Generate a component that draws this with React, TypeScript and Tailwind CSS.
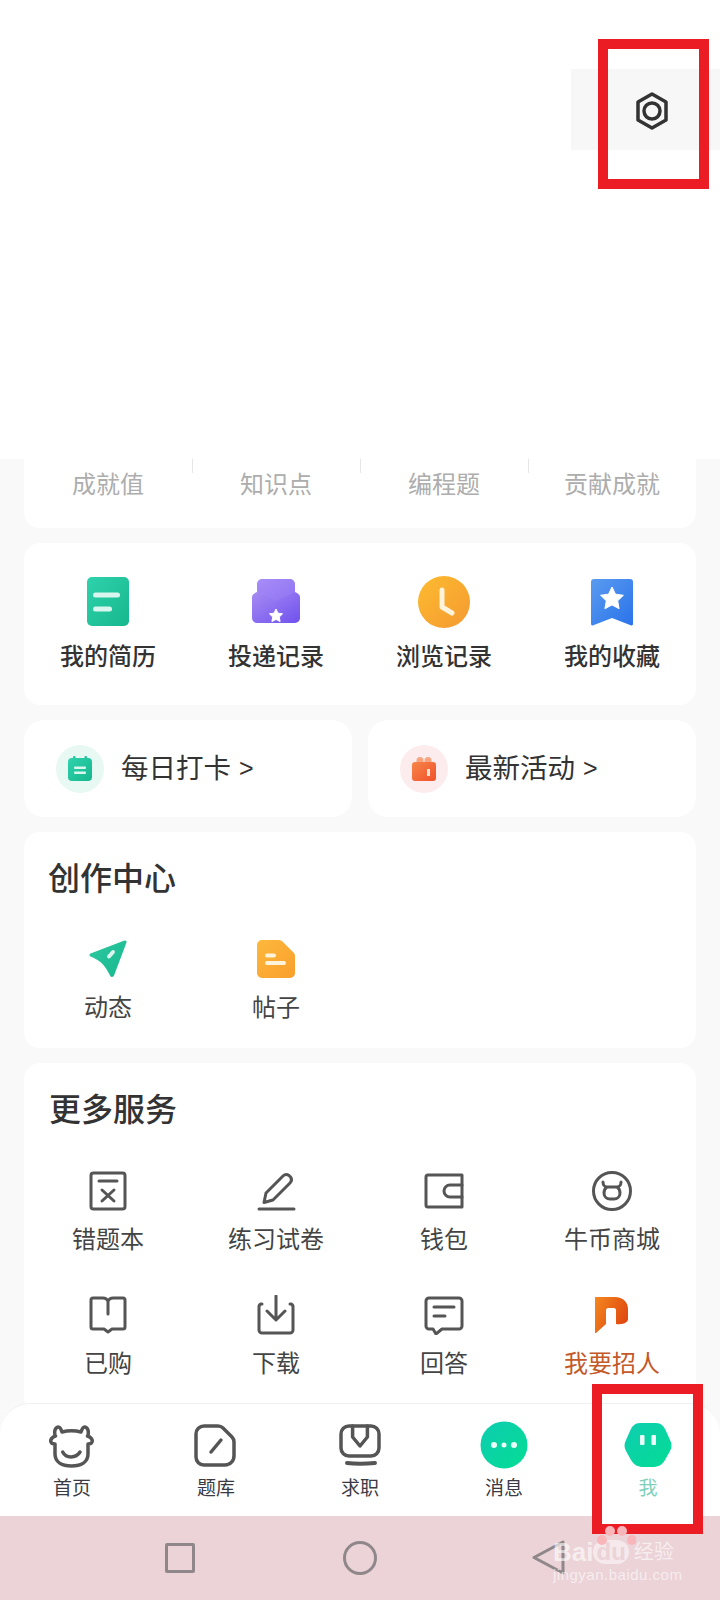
import type { ReactNode } from 'react';

const FONT = "font-['Liberation_Sans','Noto_Sans_CJK_SC',sans-serif]";

function Grad({ id, from, to }: { id: string; from: string; to: string }) {
  return (
    <linearGradient id={id} x1="0" y1="0" x2="1" y2="1">
      <stop offset="0" stopColor={from} />
      <stop offset="1" stopColor={to} />
    </linearGradient>
  );
}

// Colored shortcuts
function ResumeIcon() {
  return (
    <svg width="42" height="50" viewBox="0 0 42 50">
      <defs><Grad id="resume" from="#2ed2ac" to="#17b78d" /></defs>
      <rect x="0" y="0" width="42" height="49" rx="5" fill="url(#resume)" />
      <rect x="6" y="15.500" width="27" height="5" rx="2.500" fill="#d8f6ee" />
      <rect x="6" y="29.500" width="19" height="5" rx="2.500" fill="#d8f6ee" />
    </svg>
  );
}

function DeliveryIcon() {
  return (
    <svg width="50" height="50" viewBox="0 0 50 50">
      <defs>
        <Grad id="mail-top" from="#a88cf8" to="#8d72f2" />
        <Grad id="mail" from="#a78bf2" to="#6f51ee" />
      </defs>
      <path d="M6 7a5 5 0 0 1 5-5h28a5 5 0 0 1 5 5v20H6z" fill="url(#mail-top)" />
      <path d="M1 20c0-2 2-4 5-5l19 9 19-9c3 1 5 3 5 5v21a5 5 0 0 1-5 5H6a5 5 0 0 1-5-5z" fill="url(#mail)" />
      <path d="M25 32l2 4.200 4.600.6-3.300 3.200.8 4.600-4.100-2.200-4.100 2.200.8-4.600-3.300-3.200 4.600-.6z" fill="#fff" stroke="#fff" strokeLinejoin="round" />
    </svg>
  );
}

function ClockIcon() {
  return (
    <svg width="52" height="52" viewBox="0 0 52 52">
      <defs><Grad id="clock" from="#fdbb2f" to="#f49a32" /></defs>
      <circle cx="26" cy="26" r="26" fill="url(#clock)" />
      <path d="M24 14v17l10 6" fill="none" stroke="#fff3dc" strokeWidth="5" strokeLinecap="round" strokeLinejoin="round" />
    </svg>
  );
}

function BookmarkIcon() {
  return (
    <svg width="42" height="48" viewBox="0 0 42 48">
      <defs><Grad id="mark" from="#5a9bf0" to="#2a73ea" /></defs>
      <path d="M0 4a3 3 0 0 1 3-3h36a3 3 0 0 1 3 3v42a1.500 1.500 0 0 1-2.300 1.200L21 40 2.300 47.200A1.500 1.500 0 0 1 0 46z" fill="url(#mark)" />
      <path d="M21 9l3.500 7.200 7.900 1.100-5.700 5.500 1.400 7.900-7.100-3.800-7.100 3.800 1.400-7.900-5.700-5.500 7.900-1.100z" fill="#fff" stroke="#fff" strokeLinejoin="round" />
    </svg>
  );
}

function CheckinIcon() {
  return (
    <svg width="24" height="25" viewBox="0 0 24 25">
      <defs><Grad id="checkin" from="#2ed2ac" to="#17b78d" /></defs>
      <rect x="5" y="0" width="2.500" height="5" rx="1" fill="#24c39c" />
      <rect x="16.500" y="0" width="2.500" height="5" rx="1" fill="#24c39c" />
      <rect x="0" y="2" width="24" height="23" rx="4" fill="url(#checkin)" />
      <rect x="6" y="10.500" width="12" height="2.500" rx="1" fill="#d8f6ee" />
      <rect x="6" y="15.500" width="12" height="2.500" rx="1" fill="#d8f6ee" />
    </svg>
  );
}

function GiftIcon() {
  return (
    <svg width="24" height="24" viewBox="0 0 24 24">
      <defs><Grad id="gift" from="#f6864a" to="#f2512a" /></defs>
      <circle cx="8" cy="3.500" r="3.500" fill="#f6a57f" />
      <circle cx="16" cy="3.500" r="3.500" fill="#f6a57f" />
      <rect x="0" y="5" width="24" height="19" rx="3" fill="url(#gift)" />
      <rect x="15" y="12" width="3" height="7" fill="#fde2d6" />
    </svg>
  );
}

function SendIcon() {
  return (
    <svg width="38" height="38" viewBox="0 0 38 38">
      <defs><Grad id="send" from="#2fc8a0" to="#16b88f" /></defs>
      <path d="M1.500 13.500L35.500.6c1.300-.5 2.400.6 2 1.900L25 35.500c-.7 1.800-3 2-3.800.3-2.500-5-5-9.500-9.200-13.300C9 20 5.500 18 1.500 16.500c-1.400-.6-1.400-2.500 0-3z" fill="url(#send)" />
      <path d="M20 16.500l4-4.500" stroke="#d8f6ee" strokeWidth="4" strokeLinecap="round" />
    </svg>
  );
}

function PostIcon() {
  return (
    <svg width="38" height="38" viewBox="0 0 38 38">
      <defs><Grad id="post" from="#fdb83c" to="#f99f2c" /></defs>
      <path d="M5 0h17a5 5 0 0 1 3.500 1.500l11 11A5 5 0 0 1 38 16v17a5 5 0 0 1-5 5H5a5 5 0 0 1-5-5V5a5 5 0 0 1 5-5z" fill="url(#post)" />
      <rect x="8" y="13.500" width="11" height="4" rx="2" fill="#fff3dc" />
      <rect x="8" y="21" width="21" height="4" rx="2" fill="#fff3dc" />
    </svg>
  );
}

// Outline icons, all drawn on the same stroke
function Line({ children }: { children: ReactNode }) {
  return (
    <svg width="40" height="40" viewBox="0 0 40 40" fill="none" stroke="#555" strokeWidth="3" strokeLinecap="round" strokeLinejoin="round">
      {children}
    </svg>
  );
}

const wrongBook = (
  <Line>
    <rect x="3" y="2" width="34" height="36" rx="2.500" />
    <path d="M11 10h18M14 19l12 11M26 19L14 30" />
  </Line>
);
const pencil = (
  <Line>
    <path d="M10 22L27 5c2-2 4-2 6-.5l1.500 1.500c1.500 2 1.500 4-.5 6L17 29 8 31.500z" />
    <path d="M3 38h35" />
  </Line>
);
const wallet = (
  <Line>
    <path d="M4 4h34v32H4a2 2 0 0 1-2-2V6a2 2 0 0 1 2-2z" />
    <path d="M38 14H26a6 6 0 0 0 0 12h12" />
  </Line>
);
const coin = (
  <Line>
    <circle cx="20" cy="20" r="18.500" />
    <path d="M11 11c0 3 2 5 4 5h10c2 0 4-2 4-5M15 16c-3 2-3 4-3 6 0 4 3 6 6 6h4c3 0 6-2 6-6 0-2 0-4-3-6" />
  </Line>
);
const book = (
  <Line>
    <path d="M20 6c-1-2-3-3-5-3H5a2 2 0 0 0-2 2v27a2 2 0 0 0 2 2h11l4 3 4-3h11a2 2 0 0 0 2-2V5a2 2 0 0 0-2-2H25c-2 0-4 1-5 3zM20 6v13" />
  </Line>
);
const download = (
  <Line>
    <path d="M6 9H5a3 3 0 0 0-2 3v23a3 3 0 0 0 3 3h28a3 3 0 0 0 3-3V12a3 3 0 0 0-2-3h-1" />
    <path d="M20 1v24M11 16l9 9 9-9" />
  </Line>
);
const answer = (
  <Line>
    <path d="M5 3h30a3 3 0 0 1 3 3v25a3 3 0 0 1-3 3H18l-6 5-3-5H5a3 3 0 0 1-3-3V6a3 3 0 0 1 3-3z" />
    <path d="M10 12h20M10 21h11" />
  </Line>
);

function RecruitIcon() {
  return (
    <svg width="34" height="36" viewBox="0 0 34 36">
      <defs>
        <linearGradient id="recruit" x1="0" y1="0" x2="1" y2="0.500">
          <stop offset="0" stopColor="#f4881f" />
          <stop offset="1" stopColor="#e04a10" />
        </linearGradient>
      </defs>
      <path d="M0 0h20c8 0 13 5 13 12v10c0 3-4 6-12 5V13c0-1-1-2-2-2h-6c-1 0-2 1-2 2v14L1 36H0z" fill="url(#recruit)" />
    </svg>
  );
}

function NavLine({ children }: { children: ReactNode }) {
  return (
    <svg width="46" height="46" viewBox="0 0 46 46" fill="none" stroke="#555" strokeWidth="3.500" strokeLinecap="round" strokeLinejoin="round">
      {children}
    </svg>
  );
}

const navCow = (
  <NavLine>
    <path d="M13 10C12 7 11 5 9.500 5 6.500 5 5 9 6 13l.5 1C3 15 1 18 2 20c.5 1.500 2 2 4 2v10c0 8 7 12 16.500 12S39 40 39 32V22c2 0 3.500-.5 4-2 1-2-1-5-4.500-6l.5-1c1-4-.5-8-3.500-8-1.500 0-2.500 2-3.500 5-6-1.500-13-1.500-19 0z" />
    <path d="M13.700 30c3.300 6.500 13.300 6.500 17.300 0" />
  </NavLine>
);
const navQuestion = (
  <NavLine>
    <path d="M11 4h14c2 0 3.500.5 5 2l9 9c1.500 1.500 2 3 2 5v14a9 9 0 0 1-9 9H11a8 8 0 0 1-8-8V12a8 8 0 0 1 8-8z" />
    <path d="M28 18L18 30" />
  </NavLine>
);
const navJob = (
  <NavLine>
    <rect x="4" y="4" width="38" height="30" rx="8" />
    <path d="M15.600 4v11l7.400 9 7.400-9V4" />
    <path d="M10 41c8 1 18 1 28 0" strokeWidth="4" />
  </NavLine>
);

function MessageIcon() {
  return (
    <svg width="48" height="48" viewBox="0 0 48 48">
      <defs><Grad id="msg" from="#0dcdb0" to="#05dc94" /></defs>
      <circle cx="24" cy="24" r="23.500" fill="url(#msg)" />
      <circle cx="14" cy="24" r="3" fill="#e9fff8" />
      <circle cx="24" cy="24" r="2.500" fill="#e9fff8" />
      <circle cx="34" cy="24" r="3" fill="#e9fff8" />
    </svg>
  );
}

function MeIcon() {
  return (
    <svg width="48" height="46" viewBox="0 0 48 46">
      <defs><Grad id="me" from="#0dcdb0" to="#05dc94" /></defs>
      <path d="M16 1h16c5 0 8 3 10 8l4 9c2 4 2 7 0 11l-5 9c-3 5-7 7-12 7H19c-5 0-9-2-12-7l-5-9c-2-4-2-7 0-11l4-9c2-5 5-8 10-8z" fill="url(#me)" />
      <rect x="16" y="13" width="4.500" height="10" rx="1" fill="#e9fff8" />
      <rect x="27.500" y="13" width="4.500" height="10" rx="1" fill="#e9fff8" />
    </svg>
  );
}

function Shortcut({ icon, label }: { icon: ReactNode; label: string }) {
  return (
    <div className="flex flex-col items-center">
      <div className="flex h-[50px] items-center justify-center">{icon}</div>
      <span className="mt-[14px] text-[24px] font-medium leading-[32px] text-[#333]">{label}</span>
    </div>
  );
}

function Service({ icon, label, orange }: { icon: ReactNode; label: string; orange?: boolean }) {
  return (
    <div className="flex flex-col items-center">
      <div className="flex h-[40px] items-center justify-center">{icon}</div>
      <span className={`mt-[14px] text-[24px] leading-[30px] ${orange ? 'text-[#c4592a]' : 'text-[#444]'}`}>{label}</span>
    </div>
  );
}

function NavItem({ icon, label, active }: { icon: ReactNode; label: string; active?: boolean }) {
  return (
    <div className="flex flex-1 flex-col items-center">
      <div className="flex h-[48px] items-center justify-center">{icon}</div>
      <span className={`mt-[7px] text-[19px] leading-[26px] ${active ? 'text-[#7fd0b8]' : 'text-[#3a3a44]'}`}>{label}</span>
    </div>
  );
}

export default function App() {
  return (
    <div className={`relative h-[1600px] w-[720px] overflow-hidden bg-[#f9f9f9] ${FONT}`}>
      {/* Blank header with settings button */}
      <div className="flex h-[459px] justify-end bg-white pt-[69px]">
        <div className="flex h-[81px] w-[149px] items-start bg-[#f7f7f7] pl-[63px] pt-[22px]">
          <svg width="36" height="40" viewBox="0 0 36 40" fill="none" stroke="#333" strokeWidth="3.500">
            <path d="M18 3l14 8v18l-14 8-14-8V11z" strokeLinejoin="round" />
            <circle cx="18" cy="20" r="8" />
          </svg>
        </div>
      </div>

      <div className="flex flex-col gap-[15px] px-[24px]">
        {/* Stats row, cut by the header */}
        <div className="relative grid h-[69px] grid-cols-4 rounded-b-[16px] bg-white">
          {['成就值', '知识点', '编程题', '贡献成就'].map((label, i) => (
            <div key={label} className="flex justify-center pt-[10px] text-[24px] leading-[32px] text-[#adadad]">
              {i > 0 && <span className="absolute top-0 h-[14px] w-px -translate-x-[84px] bg-[#e6e6e6]" />}
              {label}
            </div>
          ))}
        </div>

        <div className="grid h-[162px] grid-cols-4 rounded-[16px] bg-white pt-[34px]">
          <Shortcut icon={<ResumeIcon />} label="我的简历" />
          <Shortcut icon={<DeliveryIcon />} label="投递记录" />
          <Shortcut icon={<ClockIcon />} label="浏览记录" />
          <Shortcut icon={<BookmarkIcon />} label="我的收藏" />
        </div>

        <div className="grid h-[97px] grid-cols-2 gap-[16px]">
          <div className="flex items-center rounded-[20px] bg-white pl-[32px] text-[27.500px] text-[#333]">
            <div className="flex h-[48px] w-[48px] items-center justify-center rounded-full bg-[#e8f8f3]">
              <CheckinIcon />
            </div>
            <span className="ml-[17px]">每日打卡</span>
            <span className="ml-[8px] text-[25px]">&gt;</span>
          </div>
          <div className="flex items-center rounded-[20px] bg-white pl-[32px] text-[27.500px] text-[#333]">
            <div className="flex h-[48px] w-[48px] items-center justify-center rounded-full bg-[#fdeced]">
              <GiftIcon />
            </div>
            <span className="ml-[17px]">最新活动</span>
            <span className="ml-[8px] text-[25px]">&gt;</span>
          </div>
        </div>

        <div className="h-[216px] rounded-[16px] bg-white pt-[26px]">
          <h2 className="pl-[24px] text-[32px] font-medium leading-[42px] text-[#333]">创作中心</h2>
          <div className="mt-[39px] grid grid-cols-4">
            <Service icon={<SendIcon />} label="动态" />
            <Service icon={<PostIcon />} label="帖子" />
          </div>
        </div>

        <div className="h-[350px] rounded-[16px] bg-white pt-[26px]">
          <h2 className="pl-[25px] text-[32px] font-medium leading-[42px] text-[#333]">更多服务</h2>
          <div className="mt-[40px] grid grid-cols-4 gap-y-[40px]">
            <Service icon={wrongBook} label="错题本" />
            <Service icon={pencil} label="练习试卷" />
            <Service icon={wallet} label="钱包" />
            <Service icon={coin} label="牛币商城" />
            <Service icon={book} label="已购" />
            <Service icon={download} label="下载" />
            <Service icon={answer} label="回答" />
            <Service icon={<RecruitIcon />} label="我要招人" orange />
          </div>
        </div>
      </div>

      {/* Tab bar over the scrolling content */}
      <div className="absolute inset-x-0 bottom-0">
        <div className="flex h-[113px] items-start rounded-t-[30px] border-t border-[#f0f0f0] bg-white pt-[17px]">
          <NavItem icon={navCow} label="首页" />
          <NavItem icon={navQuestion} label="题库" />
          <NavItem icon={navJob} label="求职" />
          <NavItem icon={<MessageIcon />} label="消息" />
          <NavItem icon={<MeIcon />} label="我" active />
        </div>
        <div className="flex h-[84px] items-center bg-[#ebd3d8] pb-[1px] pl-[165px]">
          <div className="h-[30px] w-[30px] rounded-[2px] border-[3px] border-[#8f8789]" />
          <div className="ml-[148px] h-[34px] w-[34px] rounded-full border-[3px] border-[#8f8789]" />
          <svg className="ml-[155px]" width="33" height="35" viewBox="0 0 33 35" fill="none" stroke="#8f8789" strokeWidth="3" strokeLinejoin="round">
            <path d="M31 2L2 17.500 31 33z" />
          </svg>
        </div>
      </div>

      {/* Annotation boxes drawn on the screenshot */}
      <div className="absolute left-[598px] top-[39px] h-[150px] w-[111px] border-[10px] border-[#ec1c24]" />
      <div className="absolute left-[592px] top-[1384px] flex h-[150px] w-[111px] items-end border-[10px] border-[#ec1c24]">
        <div className="h-[8px] w-full bg-white" />
      </div>

      {/* Baidu watermark */}
      <div className="absolute left-[553px] top-[1526px] w-[130px] text-white/60">
        <svg className="absolute left-[43px] top-0" width="40" height="20" viewBox="0 0 40 20" fill="#f8b6ba">
          <circle cx="6" cy="14" r="5" />
          <circle cx="14" cy="5" r="5" />
          <circle cx="26" cy="5" r="5" />
          <circle cx="36" cy="14" r="5" />
        </svg>
        <div className="flex items-center pt-[12px] leading-[28px]">
          <span className="text-[26px] font-bold">Bai</span>
          <span className="rounded-[12px] bg-white/50 px-[3px] text-[24px] font-bold leading-[24px] text-[#ebd3d8]">du</span>
          <span className="ml-[5px] text-[20px]">经验</span>
        </div>
        <div className="text-[15px] leading-[18px] tracking-[0.5px]">jingyan.baidu.com</div>
      </div>
    </div>
  );
}
